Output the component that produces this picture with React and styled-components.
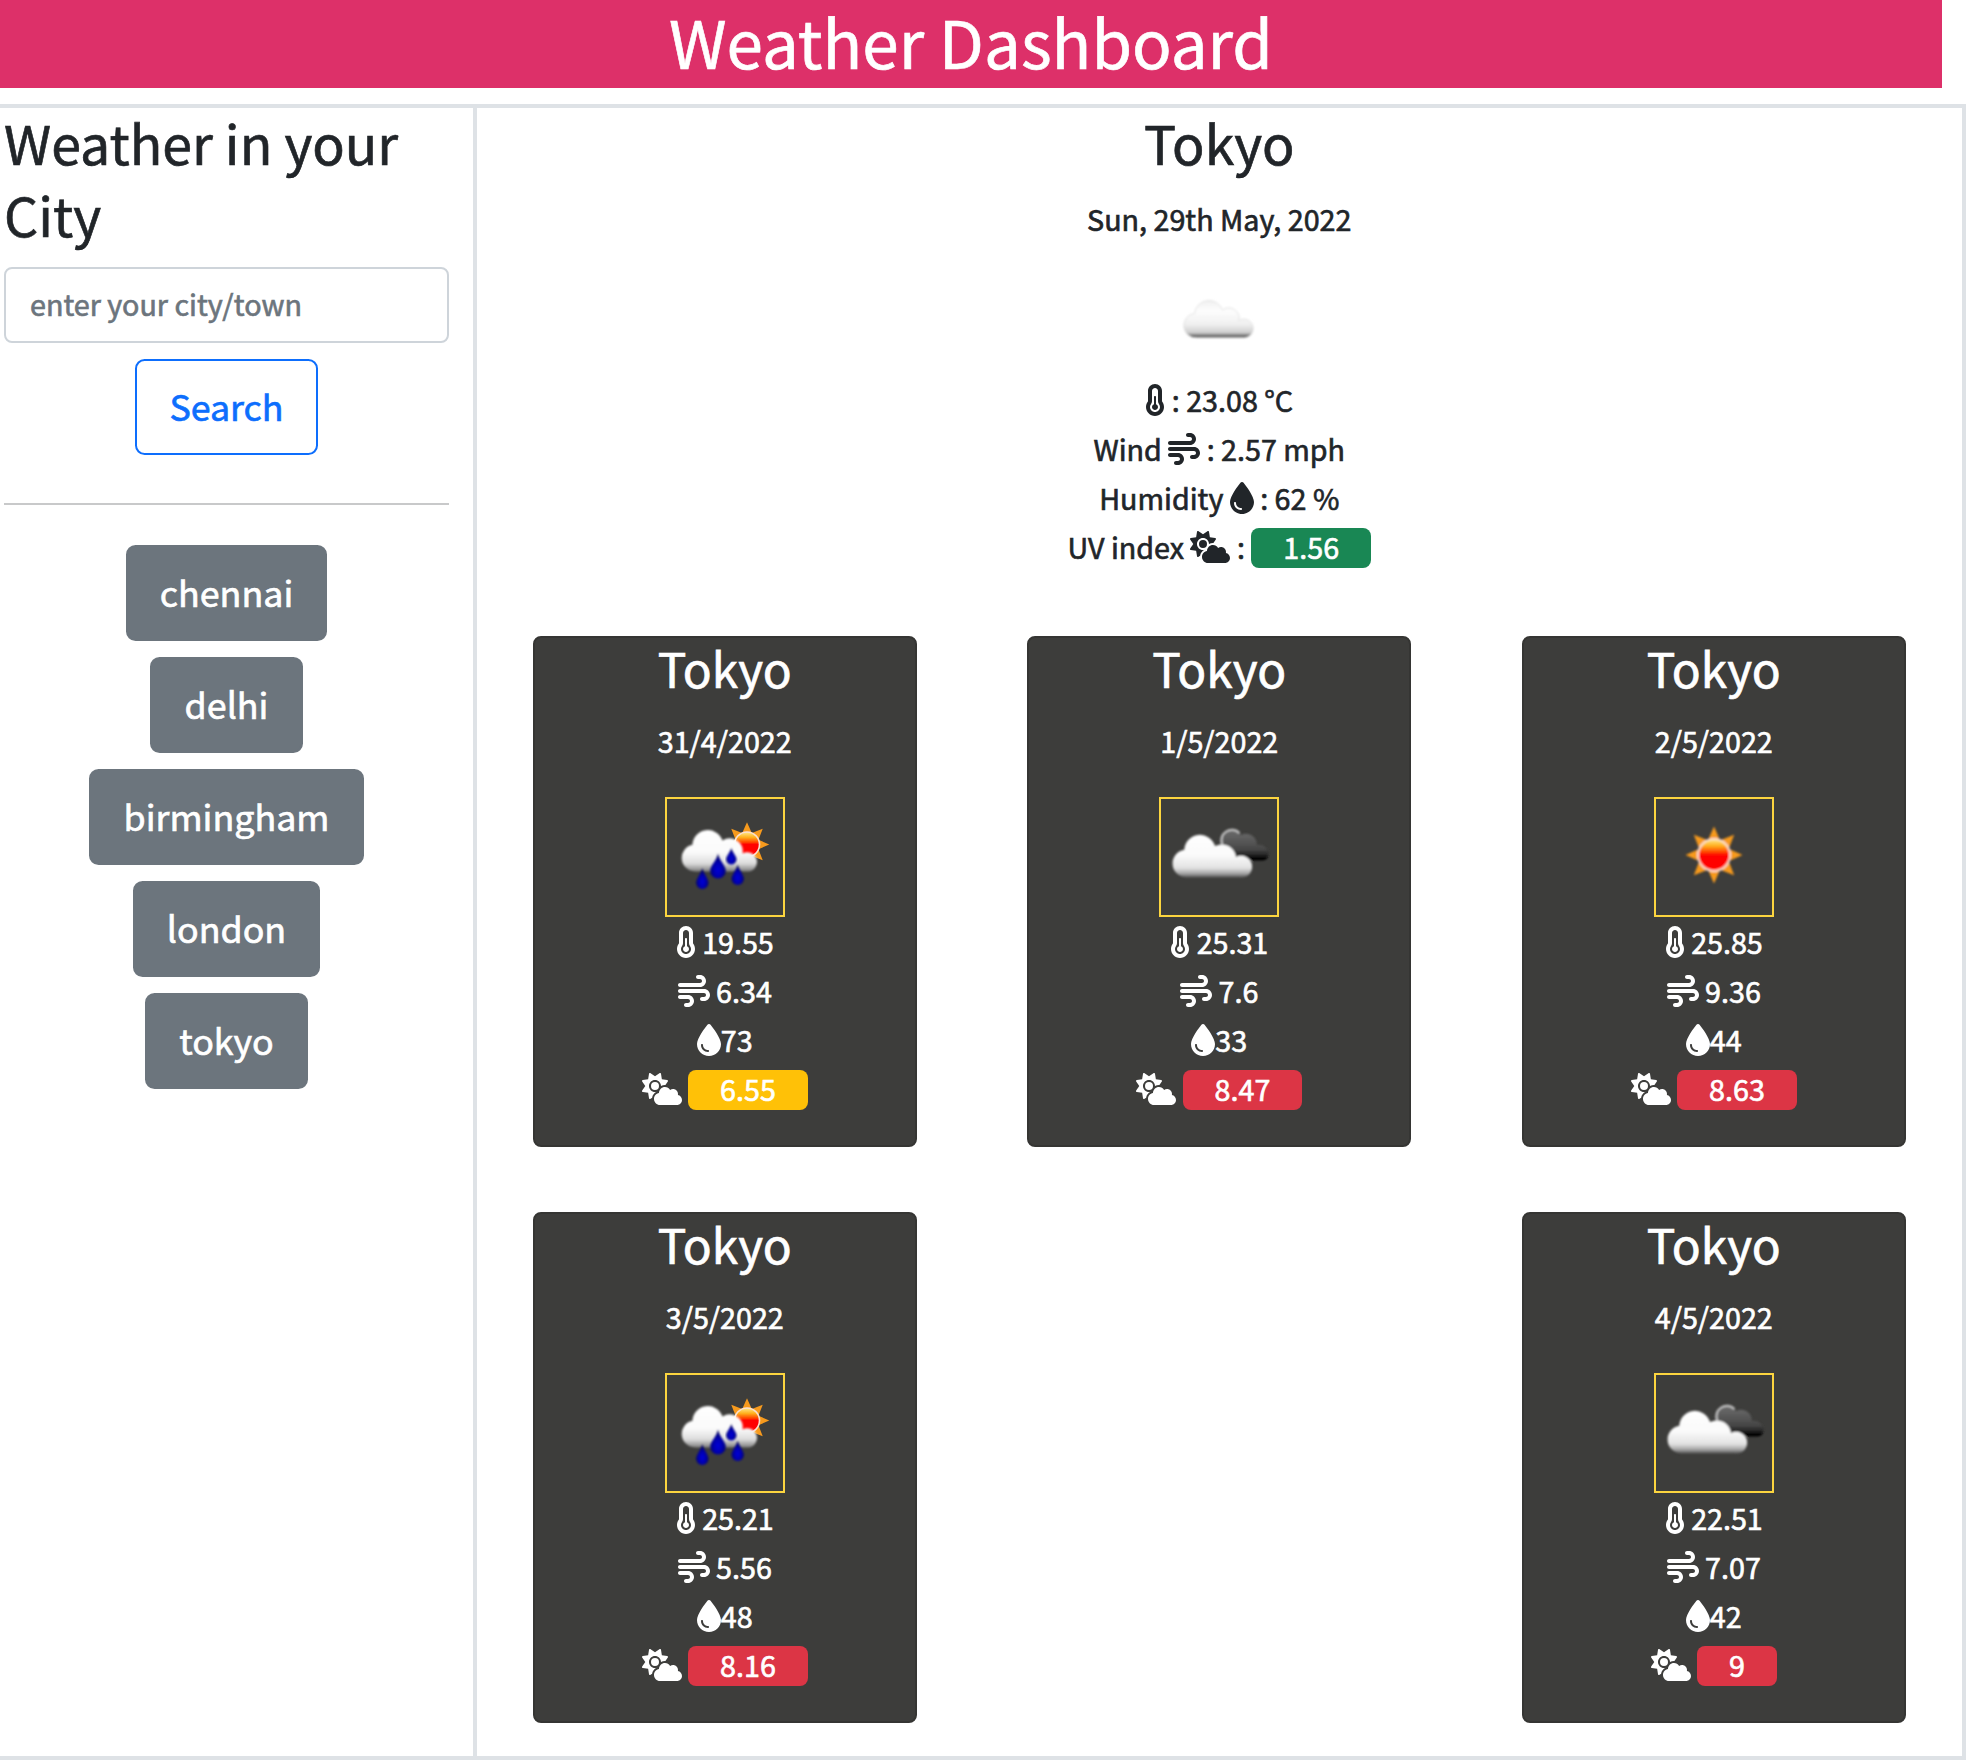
import React from "react";
import styled, { createGlobalStyle } from "styled-components";
import { FaTemperatureHalf, FaWind, FaDroplet, FaCloudSun } from "react-icons/fa6";

const GlobalStyle = createGlobalStyle`
  * { box-sizing: border-box; }
  body {
    margin: 0;
    background: #fff;
    color: #212529;
    font-family: "Noto Sans CJK JP", "Noto Sans", sans-serif;
    font-size: 28.7px;
    font-weight: 400;
    line-height: 48px;
    -webkit-text-stroke: 0.65px currentColor;
  }
  h1, h2, h3, p { margin: 0; font-weight: 400; }
`;

const Page = styled.div`
  width: 1966px;
  height: 1760px;
  display: flex;
  flex-direction: column;
`;

const Header = styled.header`
  width: 1942px;
  height: 88px;
  margin-bottom: 16px;
  background: #dd3069;
  color: #fff;
  text-align: center;
`;

const Title = styled.h1`
  font-size: 65.6px;
  line-height: 81px;
`;

const Layout = styled.div`
  flex: 1;
  display: flex;
  border: 4px solid #dee2e6;
  border-left: 0;
`;

const Sidebar = styled.aside`
  width: 477px;
  padding: 0 24px 0 4px;
  border-right: 4px solid #dee2e6;
  display: flex;
  flex-direction: column;
  align-items: center;
`;

const Heading = styled.h2`
  width: 100%;
  margin: -2px 0 2px;
  font-size: 53.7px;
  line-height: 72px;
  text-align: ${(p) => (p.$center ? "center" : "left")};
`;

const CityInput = styled.input`
  width: 100%;
  height: 76px;
  margin: 15px 0 16px;
  padding: 0 24px 3px;
  border: 2px solid #ced4da;
  border-radius: 8px;
  background: #fff;
  font: inherit;
  color: #212529;
  &::placeholder { color: #6c757d; opacity: 1; }
`;

const Button = styled.button`
  height: 96px;
  padding: 0 32.2px 5px;
  border: 2px solid ${(p) => (p.$outline ? "#0d6efd" : "#6c757d")};
  border-radius: 9.6px;
  background: ${(p) => (p.$outline ? "transparent" : "#6c757d")};
  color: ${(p) => (p.$outline ? "#0d6efd" : "#fff")};
  font: inherit;
  font-size: 35.8px;
  line-height: 60px;
`;

const Divider = styled.hr`
  width: 100%;
  height: 2px;
  margin: 48px 0 40px;
  border: 0;
  background: #c8c9ca;
`;

const History = styled.div`
  display: flex;
  flex-direction: column;
  align-items: center;
  gap: 16px;
`;

const Main = styled.main`
  flex: 1;
  padding: 0 1px 0 0.5px;
  display: flex;
  flex-direction: column;
`;

const Current = styled.section`
  display: flex;
  flex-direction: column;
  align-items: center;
  height: 528px;
`;

const DateLine = styled.p`
  margin: 15px 0 33px;
  text-align: center;
`;

const Reading = styled.div`
  height: 49px;
  line-height: 47px;
  white-space: pre;
  text-align: center;
  svg {
    width: ${(p) => p.$icon}px;
    height: 32px;
    vertical-align: -4px;
  }
`;

const Badge = styled.span`
  display: inline-block;
  height: 40px;
  padding: 0 32px;
  border-radius: 8px;
  background: ${(p) => p.$color};
  color: #fff;
  line-height: 38px;
`;

const Forecast = styled.section`
  display: grid;
  grid-template-columns: repeat(3, 1fr);
  justify-items: center;
  row-gap: 64.2px;
`;

const Card = styled.article`
  grid-column: ${(p) => p.$column};
  width: 384px;
  height: 511.4px;
  border: 2px solid #353533;
  border-radius: 8px;
  background: #3d3d3b;
  color: #fff;
  display: flex;
  flex-direction: column;
  align-items: center;
`;

const CardTitle = styled.h3`
  margin: -2px 0 2px;
  font-size: 47.8px;
  line-height: 64px;
`;

const IconFrame = styled.div`
  width: 120px;
  height: 120px;
  margin-top: -1px;
  margin-bottom: 1px;
  border: 2px solid #fcd53f;
`;

const Art = styled.svg`
  display: block;
`;

const Gradients = () => (
  <defs>
    <linearGradient id="white" x1="0" y1="36" x2="0" y2="80" gradientUnits="userSpaceOnUse">
      <stop offset="0" stopColor="#fff" />
      <stop offset=".5" stopColor="#fafafa" />
      <stop offset=".78" stopColor="#e2e2e2" />
      <stop offset=".9" stopColor="#aaa" />
      <stop offset="1" stopColor="#555" />
    </linearGradient>
    <linearGradient id="rainwhite" x1="0" y1="32" x2="0" y2="75" gradientUnits="userSpaceOnUse">
      <stop offset="0" stopColor="#fff" />
      <stop offset=".55" stopColor="#fafafa" />
      <stop offset=".8" stopColor="#dcdcdc" />
      <stop offset="1" stopColor="#777" />
    </linearGradient>
    <linearGradient id="pale" x1="0" y1="24" x2="0" y2="68" gradientUnits="userSpaceOnUse">
      <stop offset="0" stopColor="#f0f0f0" />
      <stop offset=".25" stopColor="#fdfdfd" />
      <stop offset=".55" stopColor="#f0f0f0" />
      <stop offset=".74" stopColor="#cfcfcf" />
      <stop offset=".84" stopColor="#4c4c4c" />
    </linearGradient>
    <linearGradient id="dark" x1="0" y1="34" x2="0" y2="63" gradientUnits="userSpaceOnUse">
      <stop offset="0" stopColor="#6a6a6a" />
      <stop offset=".6" stopColor="#484848" />
      <stop offset=".8" stopColor="#262626" />
      <stop offset=".92" stopColor="#000" />
    </linearGradient>
    <linearGradient id="core" x1="0" y1="0" x2="0" y2="1">
      <stop offset="0" stopColor="#ffe27a" />
      <stop offset=".2" stopColor="#ffae1c" />
      <stop offset=".42" stopColor="#ff3a00" />
      <stop offset=".5" stopColor="#f00" />
      <stop offset="1" stopColor="#f00" />
    </linearGradient>
    <radialGradient id="drop" cx=".5" cy=".65" r=".55">
      <stop offset="0" stopColor="#0404d8" />
      <stop offset=".55" stopColor="#0000ac" />
      <stop offset="1" stopColor="#00005e" />
    </radialGradient>
    <filter id="soft" x="-10%" y="-10%" width="120%" height="120%">
      <feGaussianBlur stdDeviation=".8" />
    </filter>
  </defs>
);

const Sun = ({ x, y, scale = 1 }) => (
  <g transform={`translate(${x} ${y}) scale(${scale})`} filter="url(#soft)">
    {[0, 45, 90, 135, 180, 225, 270, 315].map((a) => (
      <path key={a} d="M0-28.5L6.4-14H-6.4Z" fill="#f79a1e" transform={`rotate(${a})`} />
    ))}
    <circle r="17" fill="#fbe0cf" />
    <circle r="15" fill="url(#core)" />
  </g>
);

const Drop = ({ x, top, bottom, r }) => (
  <path
    d={`M${x} ${top}C${x + 1} ${top + r * 0.8} ${x + r} ${bottom - r * 1.6} ${x + r} ${bottom - r}A${r} ${r} 0 0 1 ${x - r} ${bottom - r}C${x - r} ${bottom - r * 1.6} ${x - 1} ${top + r * 0.8} ${x} ${top}Z`}
    fill="url(#drop)"
    filter="url(#soft)"
  />
);

const art = {
  scattered: (
    <g filter="url(#soft)" transform="translate(1 0)">
      <path d="M37.5 61.7A12 12 0 0 1 34.5 37.5A14.5 14.5 0 0 1 62.5 34A10.5 10.5 0 0 1 79 44.5A9.3 9.3 0 1 1 84.5 61.7Z" fill="url(#pale)" stroke="#d9d9d9" strokeWidth=".7" />
    </g>
  ),
  clouds: (
    <g filter="url(#soft)" transform="translate(.5 .5)">
      <path d="M62 50A11 11 0 0 1 81.5 37.5A11 11 0 0 1 97.5 47.5A9.5 9.5 0 0 1 109 56Q108.500 63 103 63H70Z" fill="url(#dark)" />
      <path d="M62.800 47A10.500 10.500 0 0 1 80 35.5" fill="none" stroke="#c4c4c4" strokeWidth="2" />
      <path d="M27.700 80A14 14 0 0 1 24.800 52.200A15.700 15.700 0 0 1 55.500 48.500A14.500 14.500 0 0 1 76.500 59.500A11 11 0 1 1 79.500 80Z" fill="url(#white)" />
    </g>
  ),
  rain: (
    <g>
      <Sun x={82} y={47.5} scale={0.78} />
      <path d="M30 74.400A13.500 13.500 0 0 1 27.400 47.700A15.500 15.500 0 0 1 57.500 43.500A13 13 0 0 1 77.500 56.500A9.700 9.700 0 1 1 84.500 74.400Z" fill="url(#rainwhite)" filter="url(#soft)" />
      <Drop x={37.3} top={71} bottom={92} r={6.2} />
      <Drop x={53} top={56.5} bottom={81.5} r={7.8} />
      <Drop x={66.3} top={51} bottom={67.5} r={5.2} />
      <Drop x={72.7} top={67.5} bottom={88} r={6.2} />
    </g>
  ),
  sun: <Sun x={60} y={58} />,
};

const uvColors = { low: "#198754", mid: "#ffc107", high: "#dc3545" };

const cities = ["chennai", "delhi", "birmingham", "london", "tokyo"];

const days = [
  { date: "31/4/2022", icon: "rain", temp: "19.55", wind: "6.34", hum: "73", uv: "6.55", level: "mid", col: 1 },
  { date: "1/5/2022", icon: "clouds", temp: "25.31", wind: "7.6", hum: "33", uv: "8.47", level: "high", col: 2 },
  { date: "2/5/2022", icon: "sun", temp: "25.85", wind: "9.36", hum: "44", uv: "8.63", level: "high", col: 3 },
  { date: "3/5/2022", icon: "rain", temp: "25.21", wind: "5.56", hum: "48", uv: "8.16", level: "high", col: 1 },
  { date: "4/5/2022", icon: "clouds", temp: "22.51", wind: "7.07", hum: "42", uv: "9", level: "high", col: 3 },
];

const DayCard = ({ day }) => (
  <Card $column={day.col}>
    <CardTitle>Tokyo</CardTitle>
    <DateLine>{day.date}</DateLine>
    <IconFrame>
      <Art width="116" height="116" viewBox="2 2 116 116">{art[day.icon]}</Art>
    </IconFrame>
    <Reading $icon={20}><FaTemperatureHalf /> {day.temp}</Reading>
    <Reading $icon={32}><FaWind /> {day.wind}</Reading>
    <Reading $icon={24}><FaDroplet />{day.hum}</Reading>
    <Reading $icon={40}>
      <FaCloudSun /> <Badge $color={uvColors[day.level]}>{day.uv}</Badge>
    </Reading>
  </Card>
);

export default function App() {
  return (
    <Page>
      <GlobalStyle />
      <Header><Title>Weather Dashboard</Title></Header>
      <Layout>
        <Sidebar>
          <Heading>Weather in your City</Heading>
          <CityInput placeholder="enter your city/town" />
          <Button $outline>Search</Button>
          <Divider />
          <History>
            {cities.map((c) => <Button key={c}>{c}</Button>)}
          </History>
        </Sidebar>
        <Main>
          <Current>
            <Heading $center>Tokyo</Heading>
            <DateLine>Sun, 29th May, 2022</DateLine>
            <Art width="120" height="100" viewBox="0 0 120 100">
              <Gradients />
              {art.scattered}
            </Art>
            <Reading $icon={20}><FaTemperatureHalf /> : 23.08 °C</Reading>
            <Reading $icon={32}>Wind <FaWind /> : 2.57 mph</Reading>
            <Reading $icon={24}>Humidity <FaDroplet /> : 62 %</Reading>
            <Reading $icon={40}>
              UV index <FaCloudSun /> : <Badge $color={uvColors.low}>1.56</Badge>
            </Reading>
          </Current>
          <Forecast>
            {days.map((d) => <DayCard key={d.date} day={d} />)}
          </Forecast>
        </Main>
      </Layout>
    </Page>
  );
}
